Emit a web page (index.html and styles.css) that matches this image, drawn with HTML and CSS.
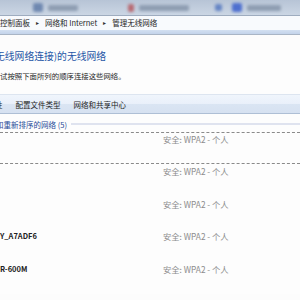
FILE: index.html
```html
<!DOCTYPE html>
<html lang="zh-CN">
<head>
  <meta charset="UTF-8">
  <title>管理无线网络</title>
  <link rel="stylesheet" href="styles.css">
</head>
<body>
  <!-- Window chrome (blurred in the capture) -->
  <div class="titlebar">
    <span class="blob blob-nav"></span>
    <span class="blob blob-text w30"></span>
    <span class="blob blob-red"></span>
    <span class="blob blob-text w50"></span>
    <span class="blob blob-blue"></span>
    <span class="blob blob-icon"></span>
    <span class="blob blob-text w34"></span>
  </div>

  <div class="addressbar">
    <span class="crumb">控制面板</span>
    <span class="sep">&#9656;</span>
    <span class="crumb">网络和 Internet</span>
    <span class="sep">&#9656;</span>
    <span class="crumb">管理无线网络</span>
  </div>
  <div class="addr-under"></div>

  <!-- Main content -->
  <div class="content">
    <h1 class="heading"><span class="cut-head">无</span>线网络连接)的无线网络</h1>
    <p class="intro">试按照下面所列的顺序连接这些网络。</p>

    <div class="toolbar">
      <span class="tool tool-cut">性</span>
      <span class="tool">配置文件类型</span>
      <span class="tool">网络和共享中心</span>
    </div>

    <div class="group">
      <span class="group-title"><span class="cut-group">和</span>重新排序的网络 (5)</span>
      <span class="group-rule"></span>
    </div>

    <ul class="networks">
      <li class="net focused"><span class="net-name"></span><span class="net-sec">安全: WPA2 - 个人</span></li>
      <li class="net"><span class="net-name"></span><span class="net-sec">安全: WPA2 - 个人</span></li>
      <li class="net"><span class="net-name"></span><span class="net-sec">安全: WPA2 - 个人</span></li>
      <li class="net"><span class="net-name">Y_A7ADF6</span><span class="net-sec">安全: WPA2 - 个人</span></li>
      <li class="net"><span class="net-name">R-600M</span><span class="net-sec">安全: WPA2 - 个人</span></li>
    </ul>
  </div>
</body>
</html>
```

FILE: styles.css
```css
body {
  margin: 0;
  width: 300px;
  height: 300px;
  overflow: hidden;
  background: #fcfcfc;
  font-family: "Noto Sans CJK SC", "Noto Sans", sans-serif;
  color: #1e1e1e;
}

/* blurred title / tab strip */
.titlebar {
  height: 15px;
  display: flex;
  align-items: center;
  background: linear-gradient(#b7c4d6, #cbd6e4);
  border-bottom: 1px solid #9eacbf;
  overflow: hidden;
}

.blob {
  display: block;
  height: 6px;
  filter: blur(1.5px);
  border-radius: 2px;
}

.blob-nav {
  margin-left: 33px;
  width: 10px;
  height: 9px;
  background: #6f88b0;
}

.blob-text {
  margin-left: 5px;
  background: #8e9db2;
}

.w30 { width: 30px; }
.w50 { width: 50px; }
.w34 { width: 34px; }

.blob-red {
  margin-left: 50px;
  width: 6px;
  height: 8px;
  background: #b86a72;
}

.blob-blue {
  margin-left: 26px;
  width: 7px;
  height: 7px;
  background: #6585c4;
}

.blob-icon {
  margin-left: 10px;
  width: 10px;
  height: 9px;
  background: #4e6fcf;
}

/* breadcrumb bar */
.addressbar {
  height: 14px;
  display: flex;
  align-items: center;
  gap: 5px;
  background: #f8fafd;
  font-size: 7.5px;
  line-height: 14px;
  white-space: nowrap;
}

.sep {
  font-size: 6px;
  color: #333;
  margin: 0 1px;
}

.addr-under {
  height: 4px;
  background: linear-gradient(#d3e0f1, #c3d3ea);
  border-bottom: 1px solid #a9b5c5;
}

.content {
  background: #fdfdfd;
}

.heading {
  margin: 15px 0 0;
  font-size: 9.8px;
  line-height: 12px;
  font-weight: normal;
  color: #2556a6;
  white-space: nowrap;
}

.cut-head {
  margin-left: -5px;
}

.intro {
  margin: 9px 0 0;
  font-size: 7.4px;
  line-height: 10px;
  white-space: nowrap;
}

/* command bar */
.toolbar {
  margin-top: 13px;
  height: 18px;
  display: flex;
  align-items: center;
  gap: 13px;
  background: linear-gradient(#f0f5fc, #e9f0fa 50%, #dae5f3 50%, #d6e1f1);
  border-top: 1px solid #dde5f0;
  border-bottom: 1px solid #aebfd5;
  font-size: 7.5px;
  white-space: nowrap;
}

.tool-cut {
  margin-left: -5px;
}

/* group header */
.group {
  margin-top: 5px;
  height: 10px;
  display: flex;
  align-items: center;
  gap: 4px;
}

.group-title {
  font-size: 7.5px;
  color: #1f4a98;
  white-space: nowrap;
}

.cut-group {
  margin-left: -4px;
}

.group-rule {
  flex: 1;
  height: 2px;
  background: #dfe3ef;
}

/* network list */
.networks {
  list-style: none;
  margin: 3px 0 0;
  padding: 0;
}

.net {
  box-sizing: border-box;
  height: 32.4px;
  display: flex;
  align-items: flex-start;
  padding-top: 2px;
  line-height: 10px;
  white-space: nowrap;
}

.net.focused {
  border-top: 1px dashed #8a8a8a;
  border-bottom: 1px dashed #8a8a8a;
  padding-top: 1px;
}

.net-name {
  width: 163px;
  font-weight: bold;
  color: #222;
  font-size: 7.5px;
}

.net-sec {
  color: #8c8c8c;
  font-size: 8.3px;
}
```
